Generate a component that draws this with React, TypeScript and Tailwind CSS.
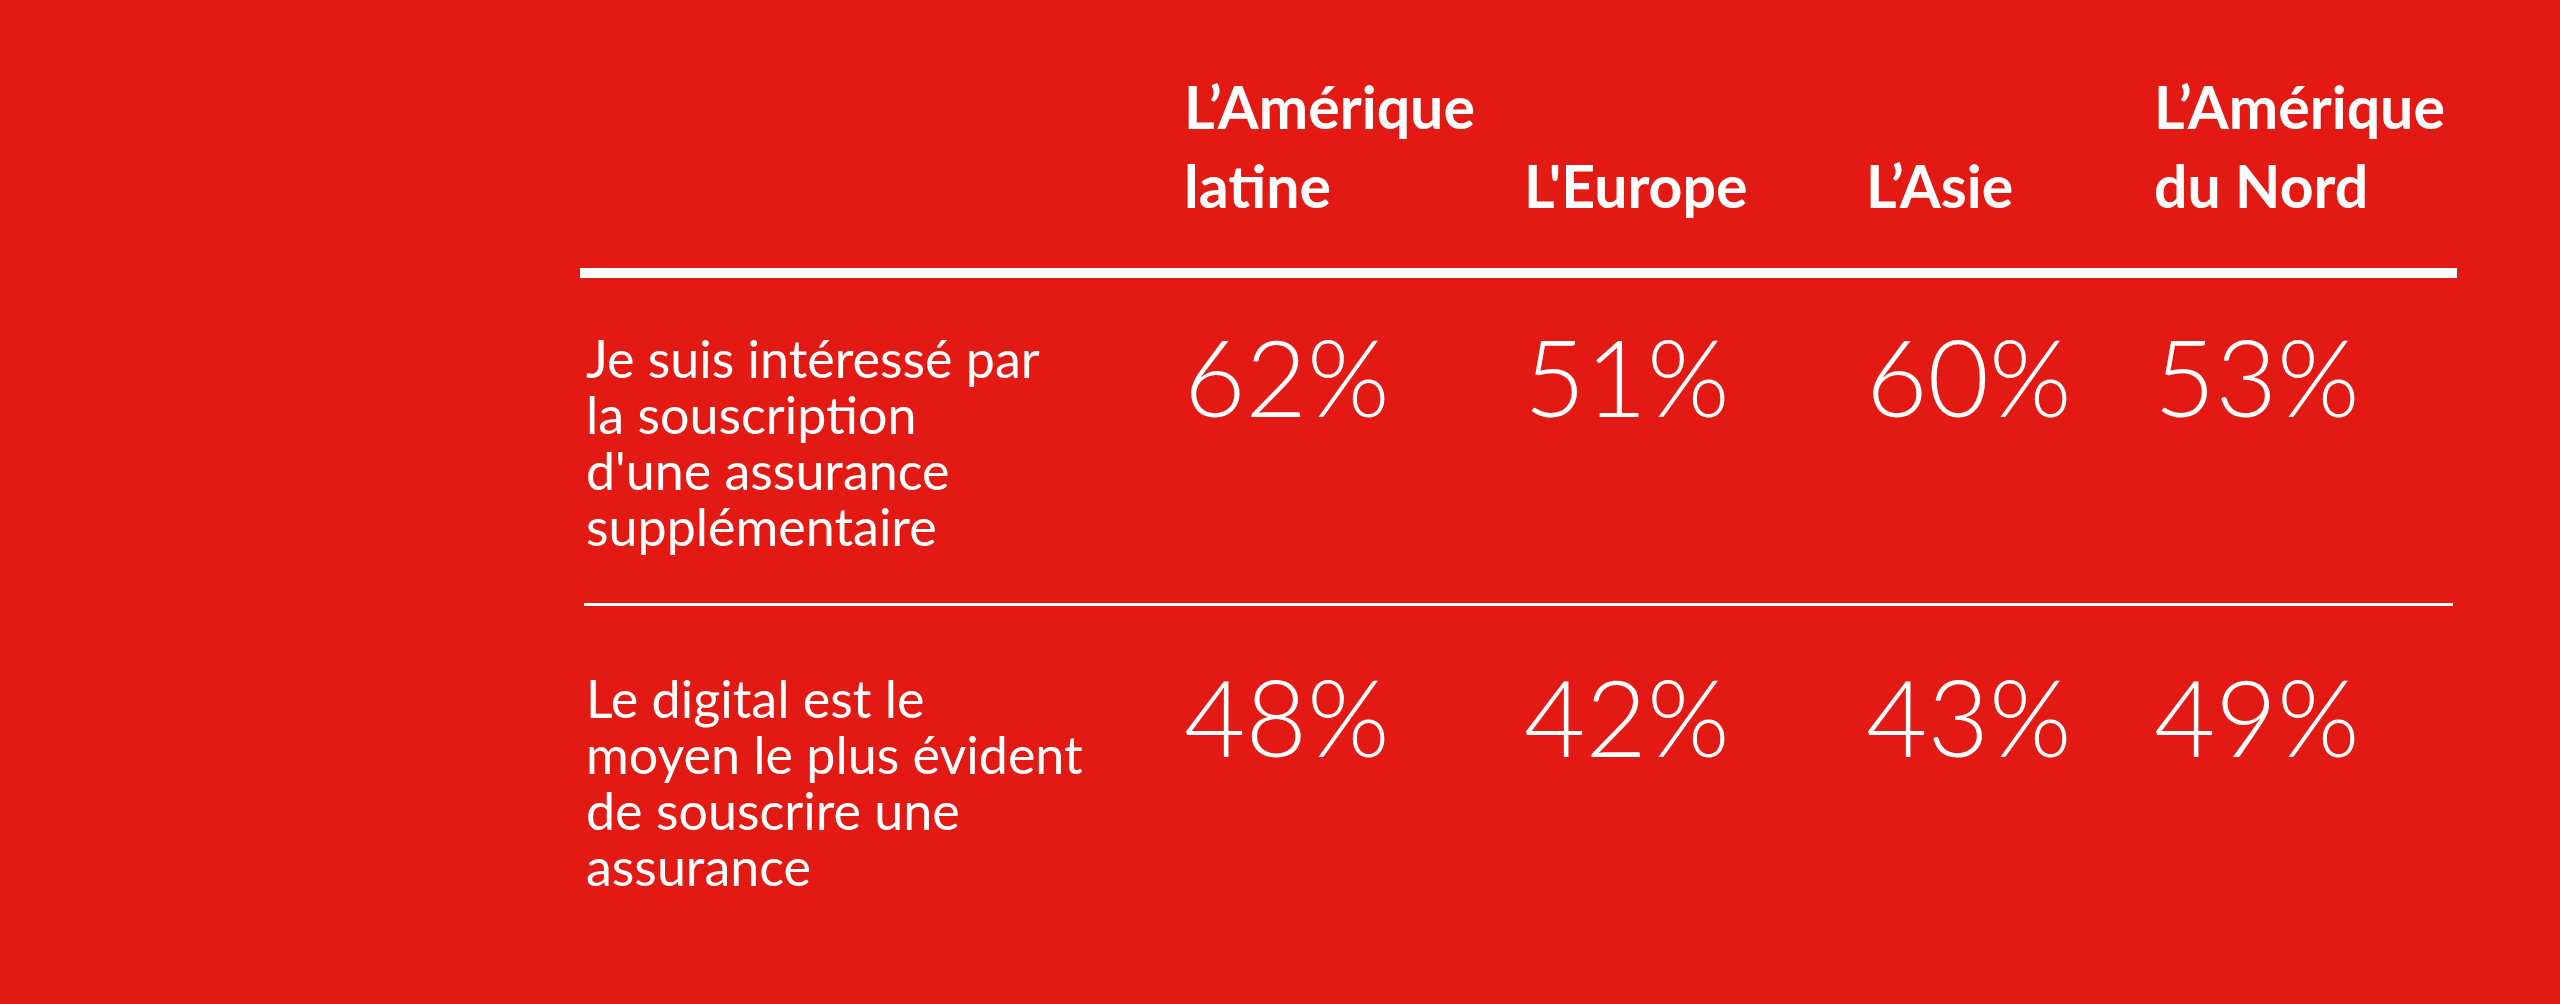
const headers = [
  ["L’Amérique", "latine"],
  ["L'Europe"],
  ["L’Asie"],
  ["L’Amérique", "du Nord"],
];

const rows = [
  {
    label: ["Je suis intéressé par", "la souscription", "d'une assurance", "supplémentaire"],
    values: ["62%", "51%", "60%", "53%"],
    pad: "pt-[52px] pb-[49px]",
  },
  {
    label: ["Le digital est le", "moyen le plus évident", "de souscrire une", "assurance"],
    values: ["48%", "42%", "43%", "49%"],
    pad: "pt-[64px] pb-[40px]",
  },
];

const cols = "grid grid-cols-[604px_340px_342px_288px_303px]";

export default function App() {
  return (
    <div className="h-[1004px] w-full bg-[#e31914] font-['Lato',sans-serif] text-white">
      <div className="ml-[580px] w-[1877px] pt-[67px]">
        <div className={`${cols} items-end`}>
          <div />
          {headers.map((h, i) => (
            <div key={i} className="text-[59px] font-bold leading-[79px] whitespace-nowrap">
              {h.map((line, j) => (
                <div key={j}>{line}</div>
              ))}
            </div>
          ))}
        </div>
        <div className="mt-[43px] h-[10px] bg-white" />
        {rows.map((r, i) => (
          <div key={i}>
            {i > 0 && <div className="mx-[4px] h-[3px] bg-white" />}
            <div className={`${cols} items-start ${r.pad}`}>
              <div className="pl-[6px] text-[52px] leading-[56px] whitespace-nowrap">
                {r.label.map((line, j) => (
                  <div key={j}>{line}</div>
                ))}
              </div>
              {r.values.map((v, j) => (
                <div key={j} className="text-[106px] font-light leading-[92px] whitespace-nowrap">
                  {v}
                </div>
              ))}
              <div />
            </div>
          </div>
        ))}
      </div>
    </div>
  );
}
